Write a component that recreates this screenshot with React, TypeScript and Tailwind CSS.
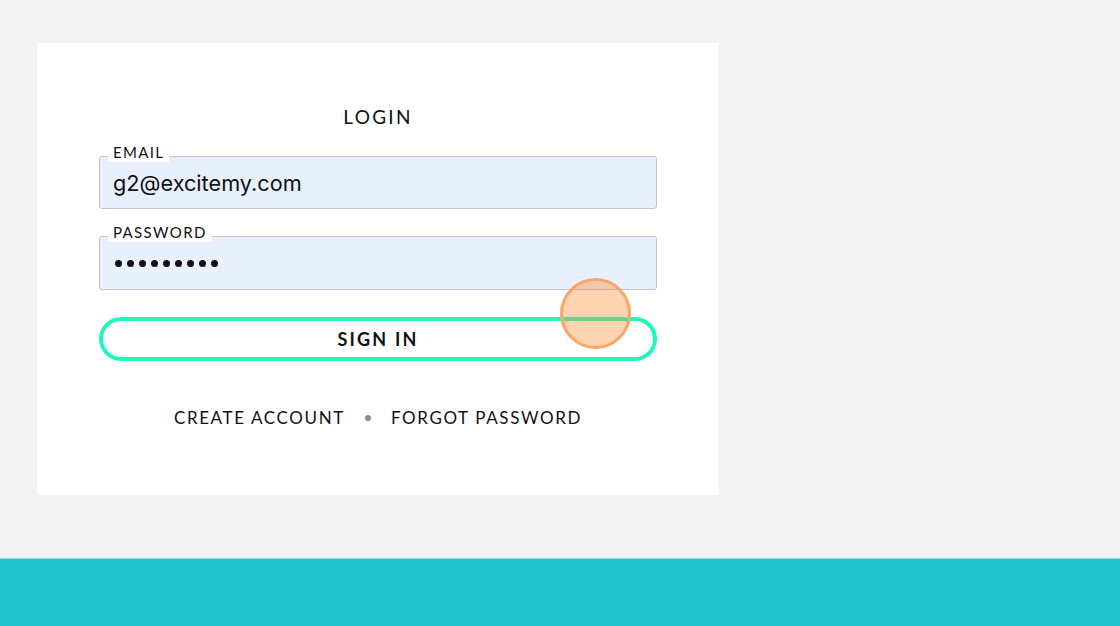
import React from "react";

export default function App() {
  return (
    <div className="flex h-[626px] w-[1120px] flex-col bg-[#f3f3f3]" style={{ fontFamily: "Lato, 'Noto Sans', sans-serif" }}>
      <div className="flex-1 pl-[37px] pt-[43px]">
        <div className="relative flex h-[452px] w-[682px] flex-col items-center bg-white px-[62px] pt-[62px]">
          <h1 className="text-[19px] leading-[24px] tracking-[0.12em] text-[#111]">LOGIN</h1>

          <div className="relative mt-[27px] h-[53px] w-full rounded-[3px] border border-[#bfc5d0] bg-[#e8f0fe]">
            <span className="absolute left-[8px] top-[-15px] bg-white px-[5px] text-[15px] leading-[20px] tracking-[0.09em] text-[#111]">EMAIL</span>
            <div className="pl-[13px] pt-[11px] text-[21.7px] leading-[30px] text-[#111]" style={{ fontFamily: "Inter, sans-serif" }}>g2@excitemy.com</div>
          </div>

          <div className="relative mt-[27px] h-[54px] w-full rounded-[3px] border border-[#bfc5d0] bg-[#e8f0fe]">
            <span className="absolute left-[8px] top-[-15px] bg-white px-[5px] text-[15px] leading-[20px] tracking-[0.09em] text-[#111]">PASSWORD</span>
            <div className="flex gap-[5px] pl-[15px] pt-[23px]">
              {Array.from({ length: 9 }).map((_, i) => (
                <span key={i} className="h-[7px] w-[7px] rounded-full bg-[#111]" />
              ))}
            </div>
          </div>

          <button className="mt-[27px] flex h-[44px] w-full items-center justify-center rounded-full border-[4px] border-[#1df8b8] bg-white text-[18px] font-bold tracking-[0.12em] text-[#111]">
            SIGN IN
          </button>

          <div className="mt-[45px] flex items-center text-[17px] leading-[24px] tracking-[0.095em] text-[#111]">
            <span>CREATE ACCOUNT</span>
            <span className="mx-[20px] h-[6px] w-[6px] rounded-full bg-[#8a8a8a]" />
            <span>FORGOT PASSWORD</span>
          </div>

          <div className="absolute left-[523px] top-[235px] h-[71px] w-[71px] rounded-full border-[3px] border-[#fba566] bg-[rgba(251,146,60,0.4)]" />
        </div>
      </div>
      <div className="h-[68px] border-t border-[#8ee0e4] bg-[#20c6cf]" />
    </div>
  );
}
